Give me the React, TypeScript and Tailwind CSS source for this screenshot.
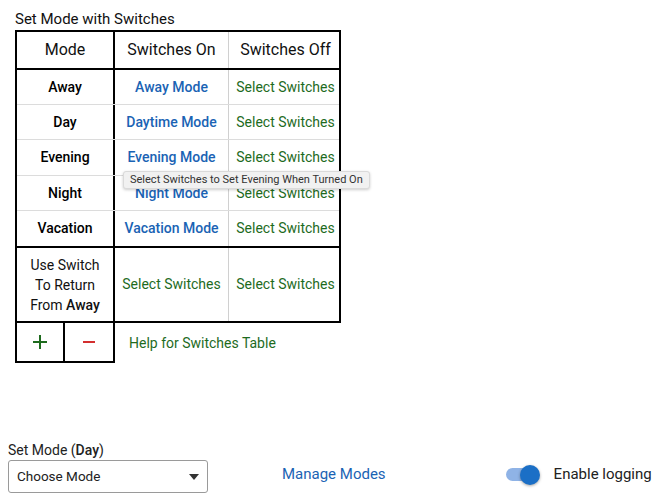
const modes = [
  { name: "Away", on: "Away Mode", h: "h-[35px]" },
  { name: "Day", on: "Daytime Mode", h: "h-[35px]" },
  { name: "Evening", on: "Evening Mode", h: "h-[36px]" },
  { name: "Night", on: "Night Mode", h: "h-[35px]" },
  { name: "Vacation", on: "Vacation Mode", h: "h-[35px]" },
];

function ModeRow({ name, on, h, last }: { name: string; on: string; h: string; last: boolean }) {
  return (
    <div className={`flex ${h} ${last ? "" : "border-b border-[#dcdcdc]"}`}>
      <div className="w-[98px] border-r-2 border-black flex items-center justify-center font-medium text-[14px] text-black">
        {name}
      </div>
      <div className="w-[114px] border-r border-[#d0d0d0] flex items-center justify-center font-medium text-[14px] text-[#1a63b4]">
        {on}
      </div>
      <div className="flex-1 flex items-center justify-center pl-[3px] text-[14px] text-[#1e6b1e]">
        Select Switches
      </div>
    </div>
  );
}

export default function App() {
  return (
    <div className="w-[666px] h-[500px] bg-white text-black overflow-hidden" style={{ fontFamily: "Roboto, 'Liberation Sans', sans-serif" }}>
      <div className="pl-[15px] pt-[8px]">
        <div className="text-[15px] leading-[22px] text-[#111]">Set Mode with Switches</div>

        <div className="relative">
          <div className="w-[326px] border-2 border-black">
            <div className="flex h-[38px] border-b-2 border-black text-[16px] text-[#111]">
              <div className="w-[98px] border-r-2 border-black flex items-center justify-center">Mode</div>
              <div className="w-[114px] border-r border-[#d0d0d0] flex items-center justify-center">Switches On</div>
              <div className="flex-1 flex items-center justify-center pl-[3px]">Switches Off</div>
            </div>

            {modes.map((m, i) => (
              <ModeRow key={m.name} name={m.name} on={m.on} h={m.h} last={i === modes.length - 1} />
            ))}

            <div className="flex h-[75px] border-t-2 border-black">
              <div className="w-[98px] border-r-2 border-black flex items-center justify-center text-center text-[14px] leading-[20px] text-[#111]">
                <div>
                  Use Switch
                  <br />
                  To Return
                  <br />
                  From <span className="font-medium">Away</span>
                </div>
              </div>
              <div className="w-[114px] border-r border-[#d0d0d0] flex items-center justify-center text-[14px] text-[#1e6b1e]">
                Select Switches
              </div>
              <div className="flex-1 flex items-center justify-center pl-[3px] text-[14px] text-[#1e6b1e]">
                Select Switches
              </div>
            </div>
          </div>

          <div className="flex items-center">
            <div className="flex w-[100px] h-[40px] border-2 border-t-0 border-black">
              <div className="w-[48px] border-r-2 border-black flex items-center justify-center">
                <svg width="16" height="16" viewBox="0 0 16 16">
                  <path d="M8 1v14M1 8h14" stroke="#1e6b1e" strokeWidth="2" />
                </svg>
              </div>
              <div className="flex-1 flex items-center justify-center">
                <svg width="12" height="4" viewBox="0 0 12 4">
                  <path d="M0 2h12" stroke="#d32f2f" strokeWidth="2" />
                </svg>
              </div>
            </div>
            <div className="ml-[14px] text-[14px] text-[#1e6b1e]">Help for Switches Table</div>
          </div>

          <div className="absolute left-[108px] top-[141px] h-[18px] px-[6px] flex items-center bg-[#f1f1f1] border border-[#dadada] rounded-[3px] shadow-[0_1px_3px_rgba(0,0,0,0.2)] text-[11px] text-[#333]">
            Select Switches to Set Evening When Turned On
          </div>
        </div>
      </div>

      <div className="pl-[8px] mt-[78px]">
        <div className="text-[14px] leading-[18px] text-[#222]">
          Set Mode (<span className="font-medium">Day</span>)
        </div>
        <div className="flex items-center mt-[1px]">
          <div className="w-[200px] h-[33px] border border-[#9a9a9a] rounded-[3px] flex items-center justify-between pl-[8px] pr-[8px]">
            <span className="text-[13.5px] text-[#222]">Choose Mode</span>
            <svg width="10" height="6" viewBox="0 0 10 6">
              <path d="M0 0h10L5 6z" fill="#333" />
            </svg>
          </div>
          <div className="ml-[74px] mb-[4px] text-[15px] text-[#1a63b4]">Manage Modes</div>
          <div className="ml-[120px] mb-[4px] relative w-[34px] h-[20px] flex items-center">
            <div className="w-[32px] h-[13px] rounded-full bg-[#8fb3e6]" />
            <div className="absolute right-0 top-0 w-[20px] h-[20px] rounded-full bg-[#1b6fc6] shadow-[0_1px_3px_rgba(0,0,0,0.35)]" />
          </div>
          <div className="ml-[14px] mb-[5px] text-[15px] text-[#222]">Enable logging</div>
        </div>
      </div>
    </div>
  );
}
